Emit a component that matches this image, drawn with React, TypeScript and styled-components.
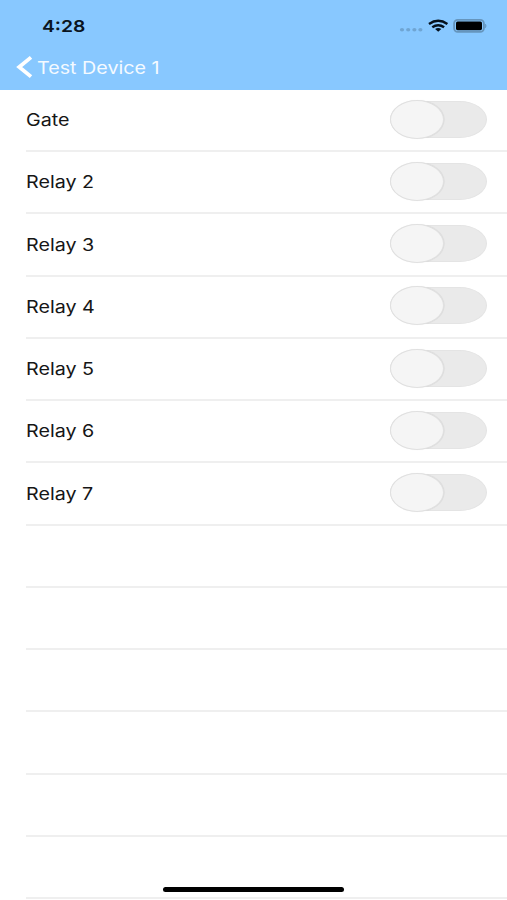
import React, { useState } from "react";
import styled, { createGlobalStyle } from "styled-components";

const GlobalStyle = createGlobalStyle`
  * { box-sizing: border-box; }
  body {
    margin: 0;
    background: #fff;
    font-family: Inter, "Liberation Sans", sans-serif;
  }
`;

const Screen = styled.div`
  position: relative;
  width: 507px;
  height: 900px;
  overflow: hidden;
  background: #fff;
`;

const Header = styled.header`
  height: 90px;
  background: #88c8ff;
`;

const StatusBar = styled.div`
  display: flex;
  align-items: center;
  justify-content: space-between;
  height: 52px;
  padding: 0 20px 0 42px;
`;

const WideText = styled.span<{ $stretch: number }>`
  display: inline-block;
  white-space: nowrap;
  transform: scaleX(${(p) => p.$stretch});
  transform-origin: left center;
`;

const Clock = styled(WideText)`
  font-size: 16.5px;
  font-weight: 600;
  line-height: 20px;
  color: #0a1420;
`;

const StatusIcons = styled.svg`
  display: block;
  width: 90px;
  height: 20px;
`;

const NavBar = styled.button`
  display: flex;
  align-items: center;
  gap: 4px;
  height: 30px;
  padding: 0 0 0 16px;
  border: 0;
  background: none;
  color: #fff;
  font-family: inherit;
`;

const NavTitle = styled(WideText)`
  padding-top: 2px;
  font-size: 16.8px;
  line-height: 22px;
  color: #f4faff;
`;

const List = styled.ul`
  display: grid;
  grid-auto-rows: 62.24px;
  margin: 0;
  padding: 0 0 0 26px;
  list-style: none;
`;

const Row = styled.li`
  display: flex;
  align-items: center;
  justify-content: space-between;
  padding: 0 20px 2px 0;
  border-bottom: 2px solid #efefef;
`;

const Label = styled(WideText)`
  margin-left: -0.5px;
  padding-top: 2px;
  font-size: 17px;
  line-height: 22px;
  color: #161616;
`;

const Track = styled.button<{ $on: boolean }>`
  display: flex;
  justify-content: ${(p) => (p.$on ? "flex-end" : "flex-start")};
  align-items: center;
  width: 97px;
  height: 37px;
  padding: 0;
  border: 1px solid #e4e4e4;
  border-radius: 28px / 19px;
  background: ${(p) => (p.$on ? "#88c8ff" : "#eaeaea")};
`;

const Knob = styled.span`
  flex: none;
  width: 54px;
  height: 39px;
  margin: 0 -1px;
  border: 1px solid #e0e0e0;
  border-radius: 50%;
  background: #f5f5f5;
  box-shadow: 0.5px 0 1px rgba(0, 0, 0, 0.08);
`;

const HomeIndicator = styled.div`
  position: absolute;
  left: 163px;
  top: 887px;
  width: 181px;
  height: 5px;
  border-radius: 3px;
  background: #000;
`;

const relays = ["Gate", "Relay 2", "Relay 3", "Relay 4", "Relay 5", "Relay 6", "Relay 7"];
const emptyRows = [0, 1, 2, 3, 4, 5];

function RelayRow({ name }: { name: string }) {
  const [on, setOn] = useState(false);
  return (
    <Row>
      <Label $stretch={1.16}>{name}</Label>
      <Track $on={on} role="switch" aria-checked={on} aria-label={name} onClick={() => setOn(!on)}>
        <Knob />
      </Track>
    </Row>
  );
}

export default function App() {
  return (
    <>
      <GlobalStyle />
      <Screen>
        <Header>
          <StatusBar>
            <Clock $stretch={1.17}>4:28</Clock>
            <StatusIcons viewBox="0 0 90 20" aria-hidden="true">
              <g fill="#6fa5d3">
                <ellipse cx="5" cy="13.8" rx="2.1" ry="1.8" />
                <ellipse cx="11.2" cy="13.8" rx="2.1" ry="1.8" />
                <ellipse cx="17.4" cy="13.8" rx="2.1" ry="1.8" />
                <ellipse cx="23.4" cy="13.8" rx="2.1" ry="1.8" />
              </g>
              <g fill="none" stroke="#04101c" strokeWidth="2.5">
                <path d="M32 8 Q41.2 1.7 50.4 8" />
                <path d="M35.3 11.3 Q41.2 7.1 47.1 11.3" />
              </g>
              <path d="M38.1 13.1 Q41.2 11 44.3 13.1 L41.2 15.8Z" fill="#04101c" />
              <rect x="57.1" y="3.9" width="29.8" height="12" rx="3.6" fill="#88c8ff" stroke="#6595bd" strokeWidth="1.8" />
              <rect x="59" y="5.6" width="26" height="8.6" rx="1.6" fill="#000" />
              <path d="M88.4 8 Q90 9.9 88.4 11.8Z" fill="#6595bd" stroke="#6595bd" strokeWidth=".6" />
            </StatusIcons>
          </StatusBar>
          <NavBar aria-label="Back">
            <svg width="17" height="24" viewBox="0 0 17 24" fill="none" stroke="#fff" strokeWidth="3.8">
              <path d="M15 2.4 L3.2 12 L15 21.6" />
            </svg>
            <NavTitle $stretch={1.175}>Test Device 1</NavTitle>
          </NavBar>
        </Header>
        <List>
          {relays.map((name) => (
            <RelayRow key={name} name={name} />
          ))}
          {emptyRows.map((n) => (
            <Row key={n} />
          ))}
        </List>
        <HomeIndicator />
      </Screen>
    </>
  );
}
